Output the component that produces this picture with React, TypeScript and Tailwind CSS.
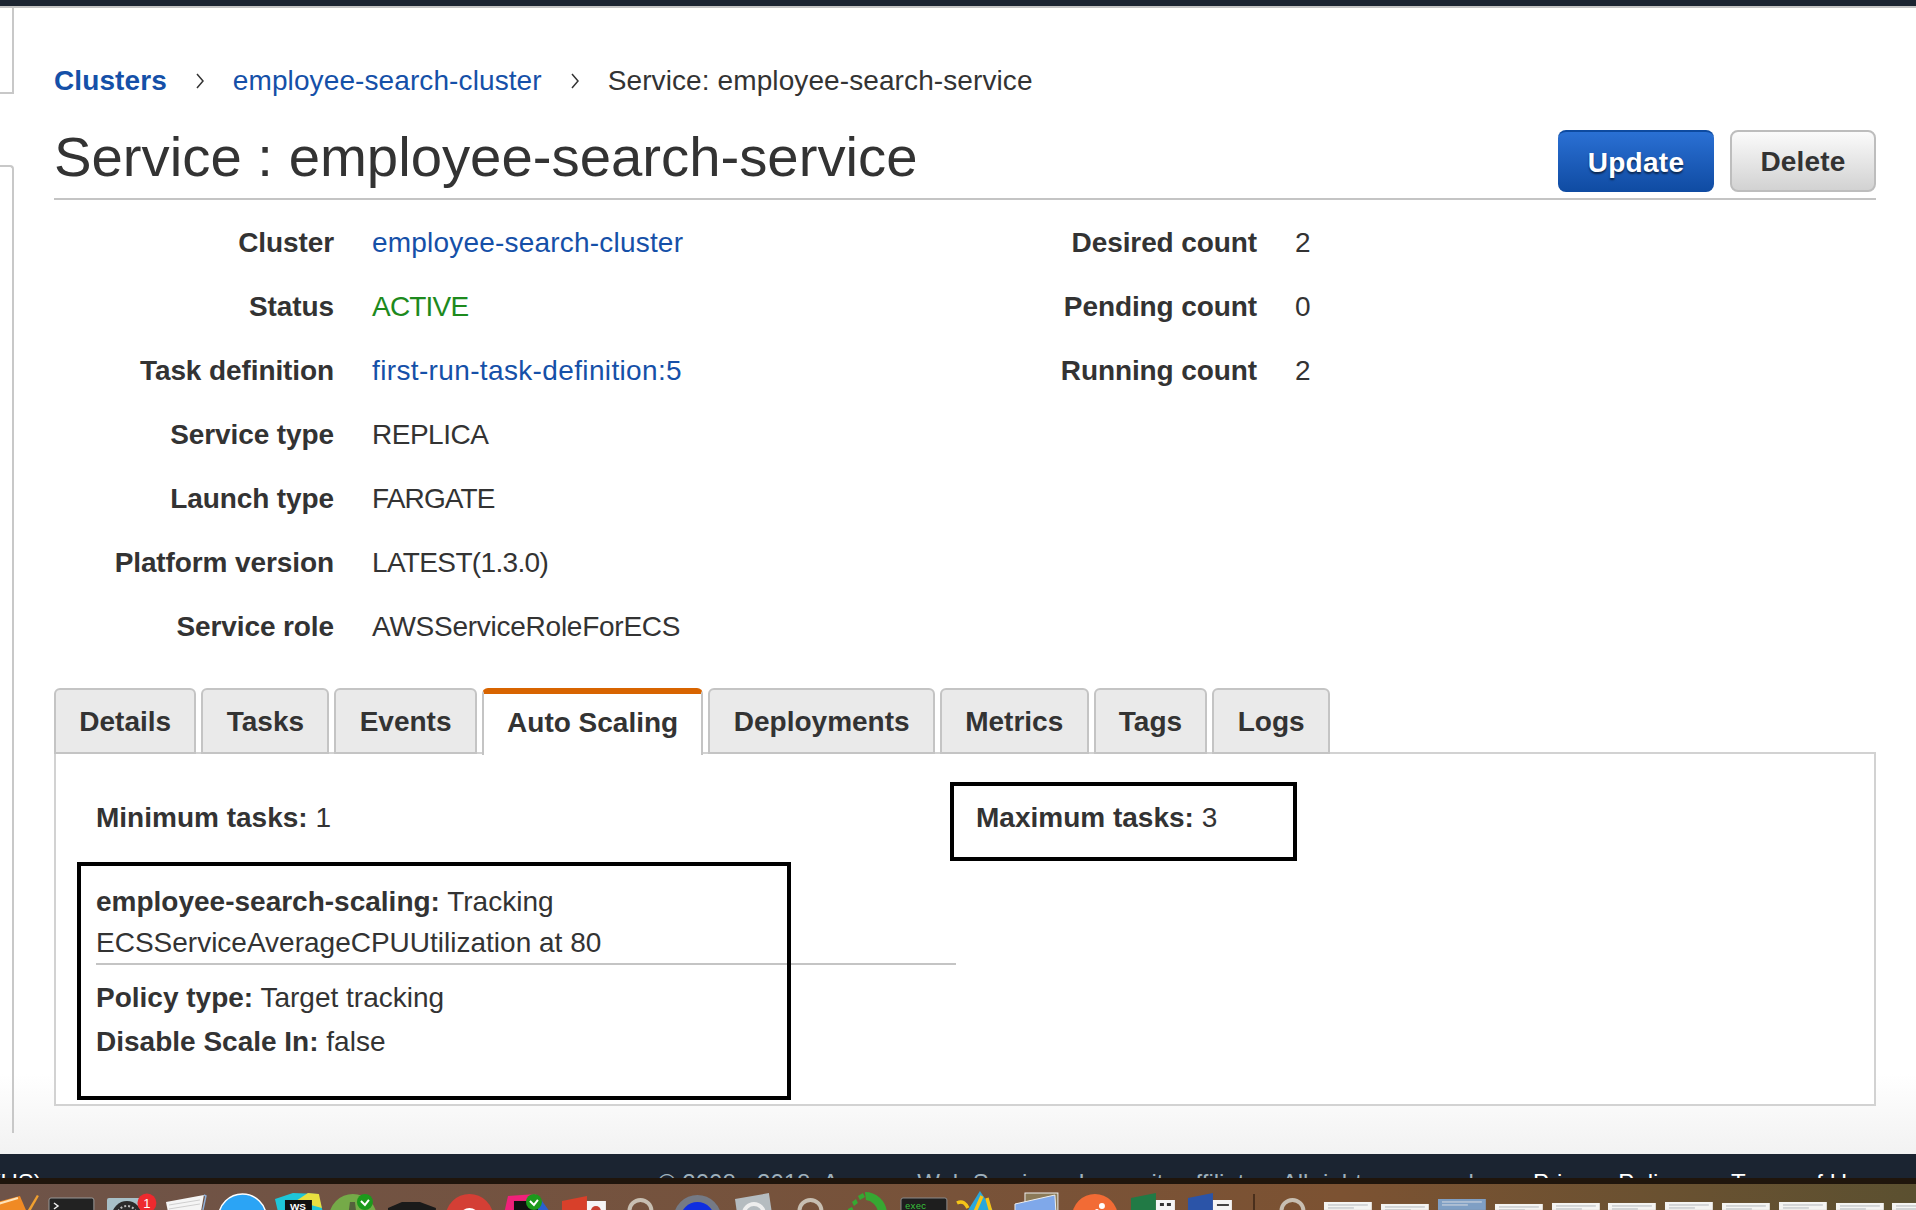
import type { ReactNode } from "react";

const leftRows = [
  { label: "Cluster", value: "employee-search-cluster", tone: "text-[#1550a8] tracking-[0.2px]" },
  { label: "Status", value: "ACTIVE", tone: "text-[#1d8a1d] tracking-[-0.8px]" },
  { label: "Task definition", value: "first-run-task-definition:5", tone: "text-[#1550a8] tracking-[0.36px]" },
  { label: "Service type", value: "REPLICA", tone: "text-[#333333] tracking-[-0.5px]" },
  { label: "Launch type", value: "FARGATE", tone: "text-[#333333] tracking-[-0.85px]" },
  { label: "Platform version", value: "LATEST(1.3.0)", tone: "text-[#333333] tracking-[-0.65px]" },
  { label: "Service role", value: "AWSServiceRoleForECS", tone: "text-[#333333] tracking-[-0.25px]" },
];

const rightRows = [
  { label: "Desired count", value: "2" },
  { label: "Pending count", value: "0" },
  { label: "Running count", value: "2" },
];

const tabs = ["Details", "Tasks", "Events", "Auto Scaling", "Deployments", "Metrics", "Tags", "Logs"];

function Slot({ children }: { children: ReactNode }) {
  return (
    <svg viewBox="0 0 57 26" className="w-[56.9px] h-[26px] shrink-0">
      {children}
    </svg>
  );
}

function Ring() {
  return <circle cx="28.5" cy="27" r="11" fill="none" stroke="#c8bfb2" strokeWidth="4" />;
}

function Check({ x, y }: { x: number; y: number }) {
  return (
    <g>
      <circle cx={x} cy={y} r="8" fill="#1c9a1c" />
      <path d={`M${x - 4} ${y - 1}l4 4 4-5`} fill="none" stroke="#fff" strokeWidth="2" />
    </g>
  );
}

function Chevron() {
  return (
    <span className="w-[66px] flex justify-center">
      <svg width="10" height="16" viewBox="0 0 10 16">
        <path d="M2 1l6 7-6 7" fill="none" stroke="#333" strokeWidth="1.5" />
      </svg>
    </span>
  );
}

function DockIcons() {
  return (
    <>
      <Slot>
        <path d="M8 19L34 12l6 14H10z" fill="#f08a24" />
        <path d="M42 26l9-15 2 1-8 14z" fill="#f0a030" />
        <path d="M12 20l20-6" stroke="#ffe3b8" strokeWidth="2" />
      </Slot>
      <Slot>
        <rect x="6" y="14" width="45" height="14" rx="2" fill="#222" stroke="#9a9a9a" />
        <path d="M11 19l4 3-4 3" fill="none" stroke="#eee" strokeWidth="1.5" />
      </Slot>
      <Slot>
        <rect x="7" y="14" width="40" height="14" rx="2" fill="#a8c0c8" />
        <circle cx="27" cy="32" r="15" fill="#2b2b2b" />
        <circle cx="27" cy="32" r="10" fill="none" stroke="#bbb" strokeWidth="2" strokeDasharray="2 2" />
        <circle cx="47" cy="19" r="9.5" fill="#ee2a2e" />
        <text x="47" y="24" textAnchor="middle" fontSize="13" fill="#fff" fontFamily="Liberation Sans">1</text>
      </Slot>
      <Slot>
        <path d="M9 18L47 11l-3 17H11z" fill="#f5f5f5" />
        <path d="M12 21l31-5M12 25l31-5" stroke="#cfcfcf" />
        <path d="M47 11l2 1-3 14" stroke="#8fb0d8" strokeWidth="1.5" fill="none" />
      </Slot>
      <Slot>
        <circle cx="28.5" cy="34" r="24" fill="#2ba4f5" stroke="#fff" strokeWidth="1.5" />
      </Slot>
      <Slot>
        <path d="M5 15L23 9l25 1 5 18H8z" fill="#1ec6d8" />
        <path d="M26 17l12-8 11 1 3 14z" fill="#e8e040" />
        <rect x="15" y="16" width="27" height="12" fill="#111" />
        <text x="28" y="26" textAnchor="middle" fontSize="10" fontWeight="700" fill="#fff" fontFamily="Liberation Sans">WS</text>
      </Slot>
      <Slot>
        <circle cx="26" cy="34" r="24" fill="#75aa48" />
        <path d="M22 26l1-8h5l1 8z" fill="#54603c" />
        <Check x={38} y={18} />
      </Slot>
      <Slot>
        <path d="M4 24l14-6h18l16 6v4H4z" fill="#1a1a1a" />
      </Slot>
      <Slot>
        <circle cx="28.5" cy="34" r="24" fill="#d43f35" />
        <path d="M28 34l22-8 3 10z" fill="#f2b632" />
        <circle cx="28.5" cy="34" r="10" fill="#fff" />
      </Slot>
      <Slot>
        <path d="M10 12l28-2 12 20H6z" fill="#f0217a" />
        <path d="M42 14l10 14H38z" fill="#2b5fd0" />
        <rect x="16" y="17" width="24" height="12" fill="#111" />
        <Check x={36} y={18} />
      </Slot>
      <Slot>
        <path d="M7 17l25-5v18H7z" fill="#d8402a" />
        <rect x="32" y="17" width="19" height="12" fill="#f5f5f5" />
        <circle cx="41" cy="27" r="5" fill="#c84030" />
      </Slot>
      <Slot>
        <Ring />
      </Slot>
      <Slot>
        <circle cx="28.5" cy="35" r="24" fill="#757a85" />
        <circle cx="28.5" cy="35" r="17" fill="#0f2ee0" />
      </Slot>
      <Slot>
        <path d="M9 15l34-6 3 20H11z" fill="#b5bcc0" />
        <circle cx="28" cy="30" r="10" fill="none" stroke="#eee" strokeWidth="4" />
      </Slot>
      <Slot>
        <Ring />
      </Slot>
      <Slot>
        <path d="M26 8a22 22 0 0 1 22 20h-9a14 14 0 0 0-12-12z" fill="#36a832" />
        <path d="M19 12l5-3 2 4-5 3zM13 18l4-3 2 4-4 3zM9 25l4-2 2 4H9z" fill="#36a832" />
      </Slot>
      <Slot>
        <rect x="5" y="14" width="46" height="14" rx="2" fill="#1e1e1e" stroke="#8c8c8c" />
        <text x="9" y="25" fontSize="9" fill="#39c83c" fontFamily="Liberation Mono">exec</text>
      </Slot>
      <Slot>
        <path d="M14 28L27 7l14 21z" fill="#2aa7dc" />
        <path d="M4 19c6-3 9 1 11 5M22 28l7-16M34 14l4 14" fill="none" stroke="#f5c518" strokeWidth="3.5" />
      </Slot>
      <Slot>
        <rect x="15" y="9" width="33" height="20" fill="#8b7a58" stroke="#eee" />
        <path d="M5 20l40-9 1 17H5z" fill="#7fa8ea" stroke="#eee" />
      </Slot>
      <Slot>
        <circle cx="28" cy="33" r="23" fill="#f26b35" />
        <circle cx="35" cy="22" r="3" fill="#fff" />
        <circle cx="30" cy="27" r="2" fill="#fff" />
      </Slot>
      <Slot>
        <path d="M7 14l25-5v20H7z" fill="#217a45" />
        <rect x="32" y="16" width="19" height="12" fill="#f5f5f5" />
        <path d="M36 19h4v3h-4zM43 19h4v3h-4z" fill="#333" />
      </Slot>
      <Slot>
        <path d="M7 14l25-5v20H7z" fill="#2b54a8" />
        <rect x="32" y="16" width="19" height="12" fill="#f5f5f5" />
        <path d="M36 21h12" stroke="#444" strokeWidth="2" />
      </Slot>
    </>
  );
}

function Thumb({ top, blue }: { top: number; blue?: boolean }) {
  return (
    <svg viewBox="0 0 57 26" className="w-[56.8px] h-[26px] shrink-0">
      <rect x="4" y={top} width="48" height={26 - top} fill={blue ? "#7f9fc4" : "#f4f4f2"} />
      <path d={`M8 ${top + 3}h40M8 ${top + 6}h26`} stroke={blue ? "#d8dde2" : "#b4b8bc"} strokeWidth="1" />
    </svg>
  );
}

export default function App() {
  return (
    <div className="w-[1916px] h-[1210px] overflow-hidden flex flex-col font-['Liberation_Sans',sans-serif] text-[#333333]">
      <div className="h-[8px] shrink-0 bg-[#1b2431] border-b-2 border-[#c4c4c4]" />

      <div className="h-[1146px] shrink-0 flex bg-linear-to-b from-white from-[93%] to-[#f2f2f2]">
        <div className="w-[14px] shrink-0 flex flex-col">
          <div className="h-[86px] border-r-2 border-b-2 border-[#c8c8c8]" />
          <div className="mt-[71px] h-[968px] border-r-2 border-t-2 border-[#c8c8c8] rounded-tr-sm" />
        </div>

        <div className="flex-1 pl-[40px] pr-[40px] pt-[55px]">
          <div className="h-[36px] flex items-center text-[28px] tracking-[0.1px]">
            <a className="font-bold text-[#1550a8]">Clusters</a>
            <Chevron />
            <a className="text-[#1550a8]">employee-search-cluster</a>
            <Chevron />
            <span>Service: employee-search-service</span>
          </div>

          <div className="h-[101px] flex justify-between border-b-2 border-[#c4c4c4]">
            <h1 className="text-[56.3px] leading-[115px] whitespace-nowrap">Service : employee-search-service</h1>
            <div className="flex gap-[16px] pt-[31px]">
              <button className="w-[156px] h-[62px] pt-[2px] rounded-lg bg-linear-to-b from-[#2a70d4] to-[#0f4ba2] border-t-2 border-[#0d4aa0] text-white text-[28px] font-bold tracking-[0.3px] [text-shadow:0_2px_2px_#00000090]">
                Update
              </button>
              <button className="w-[146px] h-[62px] pt-[2px] rounded-lg bg-linear-to-b from-[#fbfbfb] to-[#d2d2d2] border-2 border-[#bdbdbd] text-[28px] font-bold tracking-[0.2px]">
                Delete
              </button>
            </div>
          </div>

          <div className="flex pt-[11px] text-[28px]">
            <div className="w-[1000px]">
              {leftRows.map((row) => (
                <div key={row.label} className="h-[64px] flex items-center">
                  <span className="w-[280px] text-right font-bold tracking-[-0.1px]">{row.label}</span>
                  <span className={`ml-[38px] ${row.tone}`}>{row.value}</span>
                </div>
              ))}
            </div>
            <div>
              {rightRows.map((row) => (
                <div key={row.label} className="h-[64px] flex items-center">
                  <span className="w-[203px] text-right font-bold tracking-[-0.1px]">{row.label}</span>
                  <span className="ml-[38px]">{row.value}</span>
                </div>
              ))}
            </div>
          </div>

          <div className="mt-[29px] flex gap-[5px] h-[66px] text-[28px] font-bold relative z-10">
            {tabs.map((tab) =>
              tab === "Auto Scaling" ? (
                <div key={tab} className="px-[23.3px] pb-[3px] h-[67px] flex items-center bg-white border-x-2 border-[#c4c4c4] border-t-[6px] border-t-[#d86400] rounded-t-md">
                  {tab}
                </div>
              ) : (
                <div key={tab} className="px-[23.3px] pt-[2px] h-[66px] flex items-center bg-[#eaeaea] border-2 border-[#c4c4c4] rounded-t-md">
                  {tab}
                </div>
              )
            )}
          </div>

          <div className="relative -mt-[2px] h-[354px] border-2 border-[#d2d2d2] bg-white pl-[40px] pt-[46px] text-[28px]">
            <div className="flex h-[36px] items-center">
              <div className="w-[880px]">
                <b>Minimum tasks:</b> 1
              </div>
              <div>
                <b>Maximum tasks:</b> 3
              </div>
            </div>
            <div className="w-[860px] mt-[45px]">
              <div className="leading-[41px] border-b-2 border-[#c4c4c4]">
                <b>employee-search-scaling:</b> Tracking
                <br />
                ECSServiceAverageCPUUtilization at 80
              </div>
              <div className="mt-[11px] leading-[44px]">
                <b>Policy type:</b> Target tracking
                <br />
                <b>Disable Scale In:</b> false
              </div>
            </div>
            <div className="absolute left-[21px] top-[108px] w-[714px] h-[238px] border-4 border-black" />
            <div className="absolute left-[894px] top-[28px] w-[347px] h-[79px] border-4 border-black" />
          </div>
        </div>
      </div>

      <div className="h-[24px] shrink-0 bg-[#1b2431] overflow-hidden flex text-[24px] leading-[24px] pt-[17px] text-[#9fb0bb] whitespace-nowrap">
        <span className="ml-[-93px] w-[751px] shrink-0 text-white">English (US)</span>
        <span className="w-[875px] shrink-0">© 2008 - 2018, Amazon Web Services, Inc. or its affiliates. All rights reserved.</span>
        <span className="w-[198px] shrink-0 text-white">Privacy Policy</span>
        <span className="text-white">Terms of Use</span>
      </div>

      <div className="h-[6px] shrink-0 bg-[#1f150c]" />

      <div className="h-[26px] shrink-0 overflow-hidden flex bg-linear-to-r from-[#6e5348] via-[#7c5232] via-70% to-[#5b5030]">
        <div className="flex ml-[-14px]">
          <DockIcons />
          <div className="ml-[15px] mt-[10px] w-[2px] h-[16px] bg-[#4a2f1c] shrink-0" />
          <div className="w-[56.8px] shrink-0 ml-[9px]">
            <Slot>
              <Ring />
            </Slot>
          </div>
          <Thumb top={18} />
          <Thumb top={20} />
          <Thumb top={15} blue />
          <Thumb top={20} />
          <Thumb top={19} />
          <Thumb top={19} />
          <Thumb top={18} />
          <Thumb top={19} />
          <Thumb top={18} />
          <Thumb top={19} />
          <Thumb top={19} />
        </div>
      </div>
    </div>
  );
}
